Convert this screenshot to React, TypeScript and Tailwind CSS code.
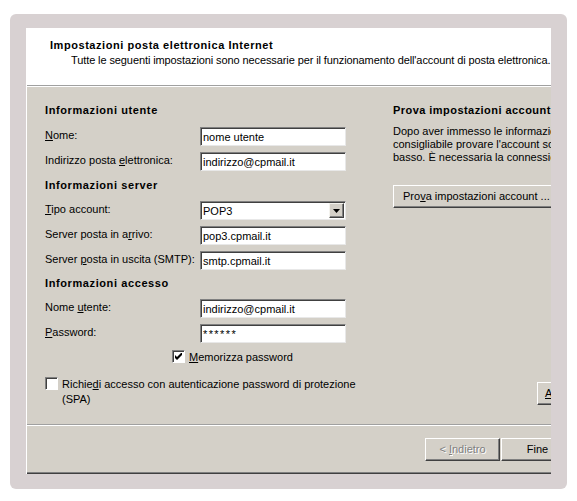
import React from 'react';

const font = { fontFamily: '"Liberation Sans", Arial, sans-serif' };

function U({ children }: { children: React.ReactNode }) {
    return <span className="underline underline-offset-[1px]">{children}</span>;
}

function Heading({ children, className = '' }: { children: React.ReactNode; className?: string }) {
    return <div className={`h-[14px] text-[11px] font-bold leading-[14px] tracking-[0.6px] ${className}`}>{children}</div>;
}

function TextBox({ value, secret }: { value: string; secret?: boolean }) {
    return (
        <div
            className={`flex h-[19px] w-[146px] items-center border border-t-[#808080] border-l-[#808080] border-r-[#e8e8e8] border-b-[#e8e8e8] bg-white pl-[2px] text-[11px] leading-[14px] shadow-[inset_1px_1px_0_#404040] ${secret ? 'tracking-[1.4px]' : ''}`}
        >
            {value}
        </div>
    );
}

function SelectBox({ value }: { value: string }) {
    return (
        <div className="flex h-[19px] w-[146px] items-center justify-between border border-t-[#808080] border-l-[#808080] border-r-[#e8e8e8] border-b-[#e8e8e8] bg-white pl-[2px] text-[11px] leading-[14px] shadow-[inset_1px_1px_0_#404040]">
            <span>{value}</span>
            <div className="mr-[1px] flex h-[15px] w-[15px] items-center justify-center border border-t-[#f4f3ee] border-l-[#f4f3ee] border-r-[#404040] border-b-[#404040] bg-[#d4d0c8] shadow-[inset_-1px_-1px_0_#808080]">
                <svg width="7" height="4" viewBox="0 0 7 4">
                    <path d="M0 0h7L3.5 4z" fill="#000" />
                </svg>
            </div>
        </div>
    );
}

function Row({ label, children }: { label: React.ReactNode; children: React.ReactNode }) {
    return (
        <div className="flex h-[25px] items-start">
            <div className="w-[155px] pt-[1px] text-[11px] leading-[14px]">{label}</div>
            {children}
        </div>
    );
}

function CheckBox({ checked }: { checked?: boolean }) {
    return (
        <div className="flex h-[13px] w-[13px] shrink-0 items-center justify-center border border-t-[#808080] border-l-[#808080] border-r-[#ffffff] border-b-[#ffffff] bg-white shadow-[inset_1px_1px_0_#404040]">
            {checked && (
                <svg width="7" height="7" viewBox="0 0 7 7">
                    <path d="M0 2v3l2 2 5-5V-1L2 4z" fill="#000" />
                </svg>
            )}
        </div>
    );
}

function Button({ children, className = '' }: { children: React.ReactNode; className?: string }) {
    return (
        <div
            className={`flex shrink-0 items-center border border-t-white border-l-white border-r-[#404040] border-b-[#404040] bg-[#d4d0c8] text-[11px] shadow-[inset_-1px_-1px_0_#808080] ${className}`}
        >
            {children}
        </div>
    );
}

export default function App() {
    return (
        <div className="h-[501px] w-[577px] bg-white pl-[10px] pt-[14px] text-black" style={font}>
            <div className="h-[475px] w-[557px] rounded-[6px] bg-[#d8d1d2] pl-[16px] pt-[14px]">
                <div className="flex h-[446px] w-[525px] flex-col overflow-hidden border-l border-l-white bg-[#d4d0c8]">
                    <div className="h-[57px] shrink-0 bg-white">
                        <div className="pl-[23px] pt-[10px] text-[11px] font-bold leading-[14px] tracking-[0.55px]">
                            Impostazioni posta elettronica Internet
                        </div>
                        <div className="whitespace-nowrap pl-[44px] pt-[1px] text-[11px] leading-[14px] tracking-[-0.1px]">
                            Tutte le seguenti impostazioni sono necessarie per il funzionamento dell'account di posta elettronica.
                        </div>
                    </div>
                    <div className="h-px shrink-0 bg-[#a0a0a0]" />
                    <div className="h-px shrink-0 bg-white" />
                    <div className="flex h-[337px] shrink-0">
                        <div className="w-[348px] shrink-0 pl-[18px] pt-[16px]">
                            <Heading>Informazioni utente</Heading>
                            <div className="mt-[10px]">
                                <Row label={<><U>N</U>ome:</>}>
                                    <TextBox value="nome utente" />
                                </Row>
                                <Row label={<>Indirizzo posta <U>e</U>lettronica:</>}>
                                    <TextBox value="indirizzo@cpmail.it" />
                                </Row>
                            </div>
                            <Heading className="mt-[1px]">Informazioni server</Heading>
                            <div className="mt-[9px]">
                                <Row label={<><U>T</U>ipo account:</>}>
                                    <SelectBox value="POP3" />
                                </Row>
                                <Row label={<>Server posta in a<U>r</U>rivo:</>}>
                                    <TextBox value="pop3.cpmail.it" />
                                </Row>
                                <Row label={<>Server <U>p</U>osta in uscita (SMTP):</>}>
                                    <TextBox value="smtp.cpmail.it" />
                                </Row>
                            </div>
                            <Heading>Informazioni accesso</Heading>
                            <div className="mt-[9px]">
                                <Row label={<>Nome <U>u</U>tente:</>}>
                                    <TextBox value="indirizzo@cpmail.it" />
                                </Row>
                                <Row label={<><U>P</U>assword:</>}>
                                    <TextBox value="******" secret />
                                </Row>
                            </div>
                            <div className="mt-px flex h-[13px] items-center gap-[4px] pl-[127px]">
                                <CheckBox checked />
                                <span className="text-[11px] leading-[14px]"><U>M</U>emorizza password</span>
                            </div>
                            <div className="mt-[14px] flex items-start gap-[4px]">
                                <CheckBox />
                                <div className="text-[11px] leading-[14px]">
                                    <div>Richie<U>d</U>i accesso con autenticazione password di protezione</div>
                                    <div className="mt-[1px]">(SPA)</div>
                                </div>
                            </div>
                        </div>
                        <div className="flex w-[200px] shrink-0 flex-col pl-[18px] pt-[16px]">
                            <Heading className="whitespace-nowrap !tracking-[0.45px]">Prova impostazioni account</Heading>
                            <div className="mt-[8px] whitespace-nowrap text-[11px] leading-[13px]">
                                <div>Dopo aver immesso le informazioni in questa schermata, è</div>
                                <div>consigliabile provare l'account scegliendo il pulsante in</div>
                                <div>basso. È necessaria la connessione di rete.</div>
                            </div>
                            <Button className="mt-[21px] h-[23px] w-[170px] pl-[9px]">
                                <span className="whitespace-nowrap">Pro<U>v</U>a impostazioni account ...</span>
                            </Button>
                            <div className="mt-[174px] flex pl-[144px]">
                                <Button className="h-[23px] w-[120px] pl-[7px]">
                                    <span className="whitespace-nowrap"><U>A</U>ltre impostazioni ...</span>
                                </Button>
                            </div>
                        </div>
                    </div>
                    <div className="h-px shrink-0 bg-[#a0a0a0]" />
                    <div className="h-px shrink-0 bg-white" />
                    <div className="flex h-[46px] shrink-0 items-start pl-[398px] pt-[12px]">
                        <Button className="h-[23px] w-[75px] justify-center">
                            <span className="text-[#808080] [text-shadow:1px_1px_0_#ffffff]">&lt; <U>I</U>ndietro</span>
                        </Button>
                        <Button className="ml-px h-[23px] w-[75px] justify-center pr-[2px]">Fine</Button>
                    </div>
                    <div className="h-px shrink-0 bg-[#808080]" />
                    <div className="h-px shrink-0 bg-[#404040]" />
                </div>
            </div>
        </div>
    );
}
